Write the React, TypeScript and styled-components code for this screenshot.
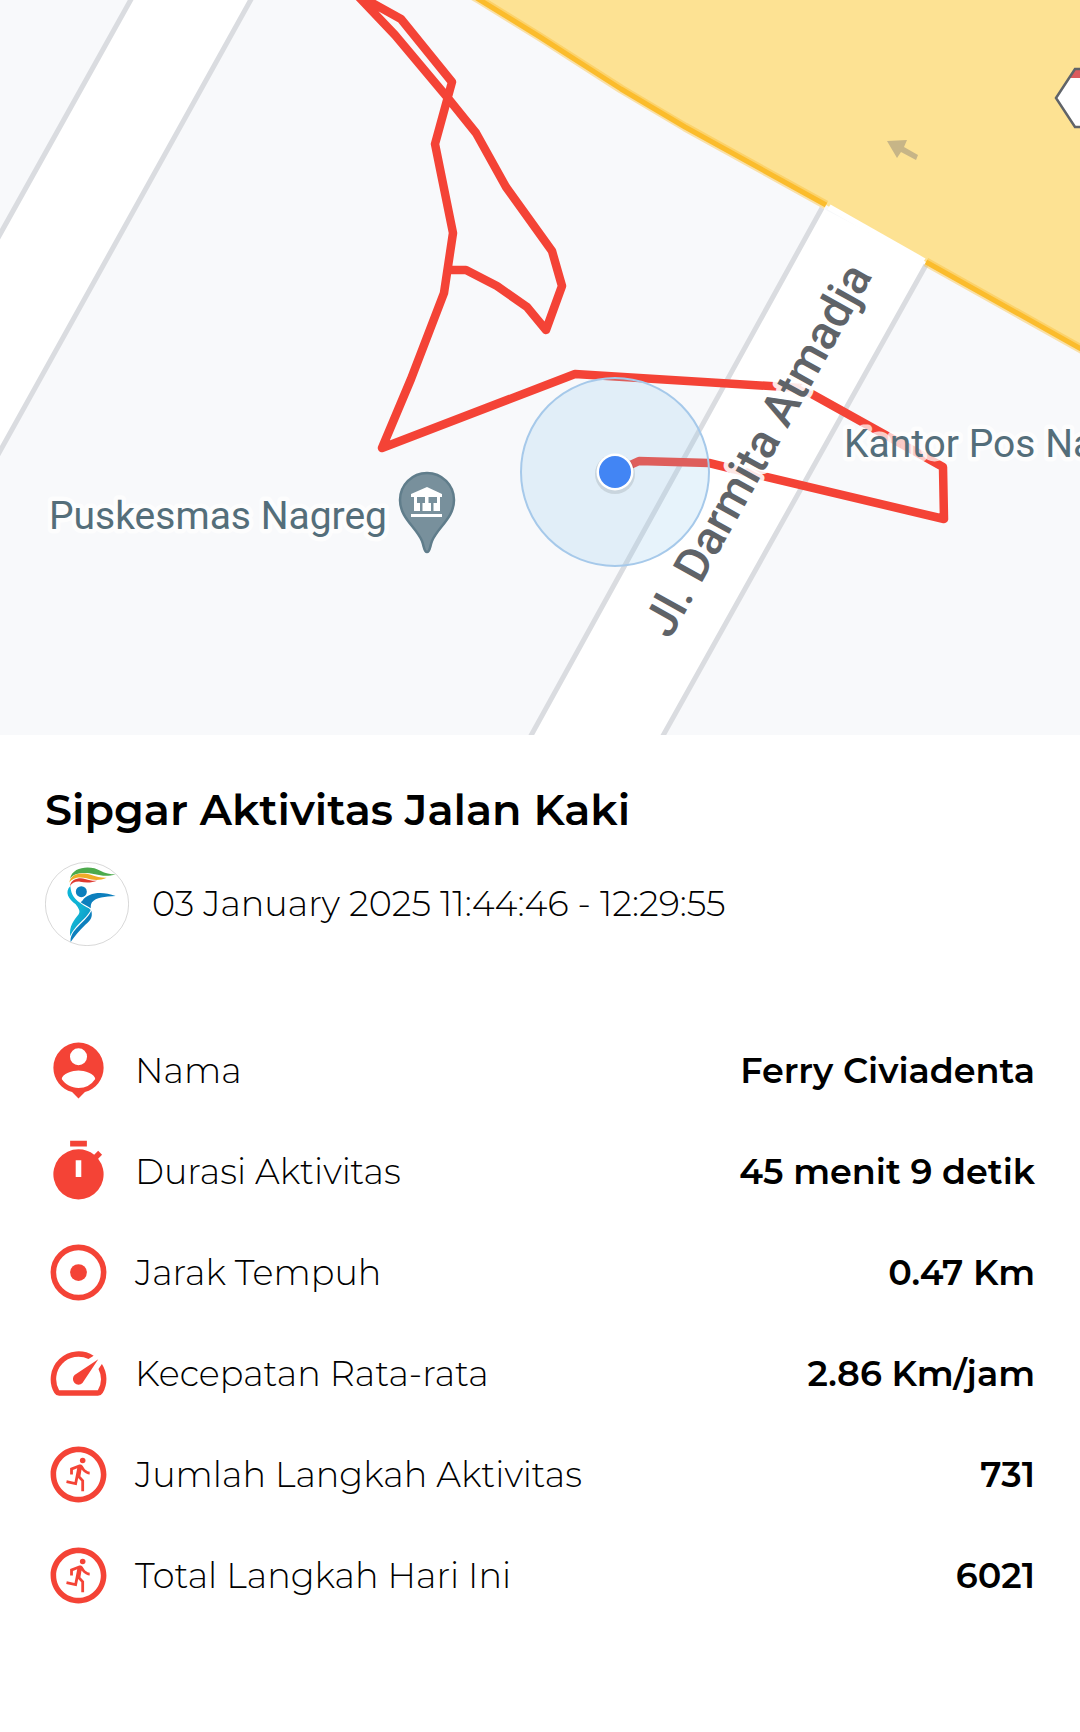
import React from "react";
import styled, { createGlobalStyle } from "styled-components";
import { MdOutlineRunCircle, MdSpeed } from "react-icons/md";

const GlobalStyle = createGlobalStyle`
  *, *::before, *::after { box-sizing: border-box; }
  body {
    margin: 0;
    background: #fff;
    color: #000;
    font-family: "Montserrat", "Inter", "Open Sans", sans-serif;
  }
`;

const accent = "#f44336";

const Page = styled.main`
  width: 100%;
`;

const MapView = styled.svg`
  display: block;
  width: 100%;
  height: auto;
  background: #f8f9fb;
`;

const PlaceLabel = styled.text`
  font: 400 39px Roboto, sans-serif;
  fill: #546e7a;
  stroke: rgba(255, 255, 255, 0.72);
  stroke-width: 9px;
  stroke-linejoin: round;
  paint-order: stroke;
`;

const StreetLabel = styled(PlaceLabel)`
  font-weight: 500;
  font-size: 47px;
  fill: #5f6368;
  stroke: rgba(255, 255, 255, 0.88);
`;

const Details = styled.section`
  padding: 45px;
`;

const Title = styled.h1`
  margin: 0 0 22px;
  font-size: 43px;
  line-height: 60px;
  font-weight: 600;
`;

const Session = styled.div`
  display: flex;
  align-items: center;
  gap: 23px;
  margin-bottom: 91px;
`;

const Logo = styled.svg`
  flex: none;
  width: 84px;
  height: 84px;
`;

const Time = styled.time`
  font-size: 35px;
  line-height: 44px;
  font-weight: 300;
`;

const Stats = styled.dl`
  display: grid;
  gap: 34px;
  margin: 0;
`;

const Stat = styled.div`
  display: flex;
  align-items: center;
  gap: 23px;
`;

const IconBox = styled.span`
  display: flex;
  flex: none;
  width: 67px;
  height: 67px;
  color: ${accent};

  svg {
    width: 100%;
    height: 100%;
  }
`;

const Label = styled.dt`
  flex: 1;
  font-size: 35px;
  line-height: 44px;
  font-weight: 300;
`;

const Value = styled.dd`
  margin: 0;
  font-size: 35px;
  line-height: 44px;
  font-weight: 600;
  text-align: right;
`;

const PersonIcon = () => (
  <svg viewBox="0 0 24 24" fill="currentColor" aria-hidden="true">
    <path
      fillRule="evenodd"
      d="M12 2a9 9 0 0 0-9 9c0 4.17 2.84 7.67 6.69 8.69L12 22l2.31-2.31C18.16 18.67 21 15.17 21 11a9 9 0 0 0-9-9zm0 2a3 3 0 1 1 0 6.1A3 3 0 0 1 12 4zm0 14.3c-2.5 0-4.71-1.28-6-3.22.03-1.99 4-3.08 6-3.08s5.97 1.09 6 3.08a7.2 7.2 0 0 1-6 3.22z"
    />
  </svg>
);

const TimerIcon = () => (
  <svg viewBox="0 0 24 24" fill="currentColor" aria-hidden="true">
    <path
      fillRule="evenodd"
      d="M15 1H9v2h6V1zm4.03 6.39 1.42-1.42-1.41-1.41-1.42 1.42A8.96 8.96 0 0 0 12 4a9 9 0 1 0 7.03 3.39zM13 14h-2V8h2v6z"
    />
  </svg>
);

const TargetIcon = () => (
  <svg viewBox="0 0 24 24" aria-hidden="true">
    <circle cx="12" cy="12" r="9" fill="none" stroke="currentColor" strokeWidth="2" />
    <circle cx="12" cy="12" r="3" fill="currentColor" />
  </svg>
);

const stats = [
  { label: "Nama", value: "Ferry Civiadenta", Icon: PersonIcon },
  { label: "Durasi Aktivitas", value: "45 menit 9 detik", Icon: TimerIcon },
  { label: "Jarak Tempuh", value: "0.47 Km", Icon: TargetIcon },
  { label: "Kecepatan Rata-rata", value: "2.86 Km/jam", Icon: MdSpeed },
  { label: "Jumlah Langkah Aktivitas", value: "731", Icon: MdOutlineRunCircle },
  { label: "Total Langkah Hari Ini", value: "6021", Icon: MdOutlineRunCircle },
];

const RouteMap = () => (
  <MapView viewBox="0 0 1080 735" role="img" aria-label="Peta rute jalan kaki">
    {/* side streets */}
    <path d="M134-6 L-6 245 V462 L254-6z" fill="#fff" />
    <path d="M822 208 L528 741 H660 L926 262z" fill="#fff" />
    <path
      d="M134-6 L-6 245 M254-6 L-6 462 M822 208 L528 741 M926 265 L660 741"
      fill="none"
      stroke="#dadce0"
      strokeWidth="5"
    />
    {/* main road */}
    <path d="M470-6 L480 0 L540 37 L621 89 L685 127 L826 205 L926 262 L1090 354 V-6z" fill="#fde293" />
    <g fill="none" strokeLinejoin="round">
      <path
        d="M470-6 L480 0 L540 37 L621 89 L685 127 L826 205 M926 262 L1090 354"
        stroke="#fbbc2c"
        strokeOpacity=".4"
        strokeWidth="9"
      />
      <path
        d="M470-6 L480 0 L540 37 L621 89 L685 127 L826 205 M926 262 L1090 354"
        stroke="#fbbc2c"
        strokeWidth="5"
      />
    </g>
    <path d="M829 207 L924 261" stroke="#fff" strokeWidth="6" />
    <path d="M887 141 L907 140 L904 147 L918 155 L916 160 L901 152 L897 158z" fill="#c7b587" />
    <path d="M1056 98 L1075 69 H1110 V127 H1075z" fill="#fff" />
    <path d="M1069 78 L1075 69 H1110 V78z" fill="#dc5b5d" />
    <path d="M1056 98 L1075 69 H1110 V127 H1075z" fill="none" stroke="#606469" strokeWidth="2.5" />
    {/* walked route */}
    <path
      d="M615 472 L639 461 L709 463 L762 476 L944 519 L943 467 L801 388 L575 374 L382 448 L411 379 L444 293 L453 233 L435 144 L452 82 L401 19 L356-6 L395 35 L447 97 L476 133 L506 187 L552 251 L562 286 L546 330 L527 307 L497 286 L466 270 L449 270"
      fill="none"
      stroke={accent}
      strokeWidth="8.5"
      strokeLinejoin="round"
    />
    {/* location accuracy and position */}
    <circle cx="615" cy="472" r="94" fill="rgba(141,200,235,.21)" stroke="#a6c9ea" strokeWidth="2" />
    <circle cx="615" cy="474" r="20" fill="rgba(60,64,67,.14)" />
    <circle cx="615" cy="472" r="18.5" fill="#fff" />
    <circle cx="615" cy="472" r="16" fill="#4285f4" />
    {/* health centre pin */}
    <path
      d="M427 552 C424 552 424 546 422 541 C416 527 400 518 400 500 A27 27 0 0 1 454 500 C454 518 438 527 432 541 C430 546 430 552 427 552z"
      fill="#78909c"
      stroke="#607d8b"
      strokeWidth="2.5"
    />
    <path
      fillRule="evenodd"
      fill="#fff"
      d="M411 494 L427 487 L442 494 V497 H440 V511 H414 V497 H411z M417 497 V503 H420 V511 H422.5 V503 H425 V497z M428.5 497 V503 H431 V511 H433.5 V503 H437 V497z M411 514 H442 V517 H411z"
    />
    <PlaceLabel x="49" y="529">Puskesmas Nagreg</PlaceLabel>
    <PlaceLabel x="844" y="457">Kantor Pos Na</PlaceLabel>
    <StreetLabel transform="translate(670 640) rotate(-60.9)">Jl. Darmita Atmadja</StreetLabel>
  </MapView>
);

const SipgarLogo = () => (
  <Logo viewBox="45 275 252 252" role="img" aria-label="Sipgar">
    <defs>
      <linearGradient id="body" x1="0" y1="0" x2="1" y2="1">
        <stop offset="0" stopColor="#0bb4d8" />
        <stop offset=".5" stopColor="#12b3d3" />
        <stop offset="1" stopColor="#0a86bf" />
      </linearGradient>
    </defs>
    <circle cx="171" cy="401" r="125" fill="#fff" stroke="#c4c4c4" strokeWidth="2" />
    <path d="M120 325 C128 286 185 285 211 301 C226 309 240 312 257 312 C235 319 215 317 195 312 C165 305 133 306 120 325z" fill="#4caa4c" />
    <path d="M118 337 C122 306 160 307 182 313 C200 319 215 323 230 322 C210 331 190 330 170 324 C148 319 128 321 118 337z" fill="#efac27" />
    <path d="M120 348 C122 325 150 321 165 326 C180 331 190 332 201 331 C185 338 165 337 150 334 C135 333 125 338 120 348z" fill="#df3a31" />
    <circle cx="154" cy="364" r="16.5" fill="#0c7fbd" />
    <path d="M121 347 C123 375 135 388 158 403 C170 411 180 414 182 419 C172 440 152 453 138 470 C128 482 124 488 121 498 C116 468 132 450 146 432 C152 423 146 414 137 402 C115 385 103 366 121 347z" fill="url(#body)" />
    <path d="M157 391 C175 366 215 362 257 377 C225 379 197 381 186 396 C181 403 183 409 182 414 C174 408 160 402 152 396z" fill="#0c7fbd" />
    <path d="M184 421 C189 441 181 451 166 463 C147 481 134 498 122 515 C120 500 128 486 140 473 C156 455 175 441 184 421z" fill="#0c7fbd" />
  </Logo>
);

export default function App() {
  return (
    <>
      <GlobalStyle />
      <Page>
        <RouteMap />
        <Details>
          <Title>Sipgar Aktivitas Jalan Kaki</Title>
          <Session>
            <SipgarLogo />
            <Time>03 January 2025 11:44:46 - 12:29:55</Time>
          </Session>
          <Stats>
            {stats.map(({ label, value, Icon }) => (
              <Stat key={label}>
                <IconBox>
                  <Icon />
                </IconBox>
                <Label>{label}</Label>
                <Value>{value}</Value>
              </Stat>
            ))}
          </Stats>
        </Details>
      </Page>
    </>
  );
}
